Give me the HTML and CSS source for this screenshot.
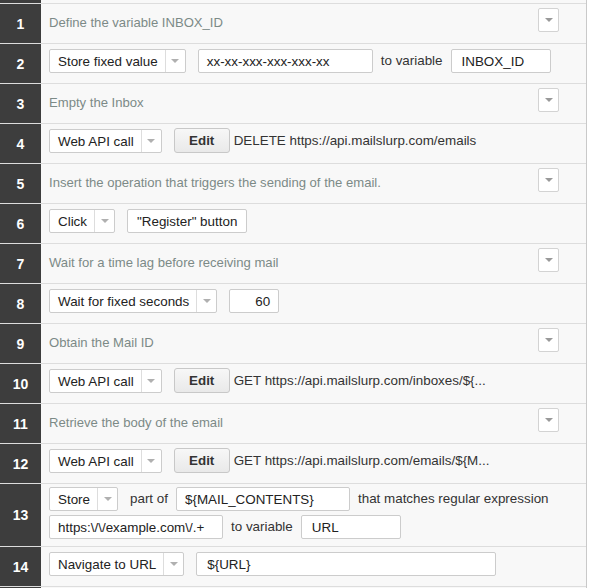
FILE: index.html
```html
<!DOCTYPE html>
<html>
<head>
<meta charset="utf-8">
<link rel="stylesheet" href="styles.css">
</head>
<body>
<div class="steps">
  <div class="row stub"><div class="num"></div><div class="body"></div></div>

  <div class="row">
    <div class="num">1</div>
    <div class="body desc"><span class="desc-text">Define the variable INBOX_ID</span><span class="toggle"><i class="tri"></i></span></div>
  </div>

  <div class="row">
    <div class="num">2</div>
    <div class="body ctrl">
      <span class="select">Store fixed value<span class="arrow"><i class="tri"></i></span></span>
      <span class="input w175">xx-xx-xxx-xxx-xxx-xx</span>
      <span class="label">to variable</span>
      <span class="input w99 pad10">INBOX_ID</span>
    </div>
  </div>

  <div class="row">
    <div class="num">3</div>
    <div class="body desc"><span class="desc-text">Empty the Inbox</span><span class="toggle"><i class="tri"></i></span></div>
  </div>

  <div class="row">
    <div class="num">4</div>
    <div class="body ctrl">
      <span class="select">Web API call<span class="arrow"><i class="tri"></i></span></span>
      <span class="btn">Edit</span>
      <span class="label">DELETE https://api.mailslurp.com/emails</span>
    </div>
  </div>

  <div class="row">
    <div class="num">5</div>
    <div class="body desc"><span class="desc-text">Insert the operation that triggers the sending of the email.</span><span class="toggle"><i class="tri"></i></span></div>
  </div>

  <div class="row">
    <div class="num">6</div>
    <div class="body ctrl">
      <span class="select">Click<span class="arrow"><i class="tri"></i></span></span>
      <span class="input plain">"Register" button</span>
    </div>
  </div>

  <div class="row">
    <div class="num">7</div>
    <div class="body desc"><span class="desc-text">Wait for a time lag before receiving mail</span><span class="toggle"><i class="tri"></i></span></div>
  </div>

  <div class="row">
    <div class="num">8</div>
    <div class="body ctrl">
      <span class="select">Wait for fixed seconds<span class="arrow"><i class="tri"></i></span></span>
      <span class="input w50 right">60</span>
    </div>
  </div>

  <div class="row">
    <div class="num">9</div>
    <div class="body desc"><span class="desc-text">Obtain the Mail ID</span><span class="toggle"><i class="tri"></i></span></div>
  </div>

  <div class="row">
    <div class="num">10</div>
    <div class="body ctrl">
      <span class="select">Web API call<span class="arrow"><i class="tri"></i></span></span>
      <span class="btn">Edit</span>
      <span class="label">GET https://api.mailslurp.com/inboxes/${...</span>
    </div>
  </div>

  <div class="row">
    <div class="num">11</div>
    <div class="body desc"><span class="desc-text">Retrieve the body of the email</span><span class="toggle"><i class="tri"></i></span></div>
  </div>

  <div class="row">
    <div class="num">12</div>
    <div class="body ctrl">
      <span class="select">Web API call<span class="arrow"><i class="tri"></i></span></span>
      <span class="btn">Edit</span>
      <span class="label">GET https://api.mailslurp.com/emails/${M...</span>
    </div>
  </div>

  <div class="row tall">
    <div class="num">13</div>
    <div class="body ctrl multi">
      <div class="line">
        <span class="select">Store<span class="arrow"><i class="tri"></i></span></span>
        <span class="label">part of</span>
        <span class="input w174">${MAIL_CONTENTS}</span>
        <span class="label">that matches regular expression</span>
      </div>
      <div class="line">
        <span class="input w174">https:\/\/example.com\/.+</span>
        <span class="label">to variable</span>
        <span class="input w99 pad10">URL</span>
      </div>
    </div>
  </div>

  <div class="row">
    <div class="num">14</div>
    <div class="body ctrl">
      <span class="select">Navigate to URL<span class="arrow"><i class="tri"></i></span></span>
      <span class="input w299 pad10">${URL}</span>
    </div>
  </div>

  <div class="row end"><div class="num"></div><div class="body"></div></div>
</div>
</body>
</html>
```

FILE: styles.css
```css
html, body {
  margin: 0;
  padding: 0;
  background: #ffffff;
}

body {
  font-family: "Liberation Sans", Arial, Helvetica, sans-serif;
  font-size: 13px;
  color: #222222;
  overflow: hidden;
  height: 588px;
}

.steps {
  width: 586px;
  border-right: 1px solid #c9c9c9;
  margin-top: -36px;
}

.row {
  display: flex;
  height: 39px;
  border-bottom: 1px solid #dddddd;
  background: #f8f8f8;
}

.row.tall {
  height: 62px;
}

.row.end {
  height: 1px;
  border-bottom: 0;
}

.num {
  width: 41px;
  flex: none;
  background: #3d3d3d;
  color: #ffffff;
  font-weight: bold;
  font-size: 14px;
  display: flex;
  align-items: center;
  justify-content: center;
}

.body {
  flex: 1;
  padding-left: 8px;
  display: flex;
  min-width: 0;
}

.desc {
  align-items: flex-start;
  justify-content: space-between;
  padding-right: 27px;
}

.desc-text {
  color: #7c8a87;
  line-height: 38px;
  font-size: 13.1px;
  white-space: nowrap;
}

.toggle {
  margin-top: 4px;
  width: 19px;
  height: 22px;
  border: 1px solid #d3d3d3;
  border-radius: 2px;
  background: #ffffff;
  display: flex;
  align-items: center;
  justify-content: center;
  flex: none;
}

.tri {
  display: block;
  width: 0;
  height: 0;
  border-left: 4px solid transparent;
  border-right: 4px solid transparent;
  border-top: 4px solid #999999;
}

.ctrl {
  align-items: flex-start;
  padding-top: 5px;
  gap: 8px;
  white-space: nowrap;
  font-size: 13.4px;
}

.ctrl.multi {
  flex-direction: column;
  padding-top: 3px;
  gap: 4px;
}

.line {
  display: flex;
  align-items: center;
  gap: 8px;
}

.select {
  display: inline-flex;
  align-items: center;
  height: 22px;
  border: 1px solid #cccccc;
  border-radius: 2px;
  background: #ffffff;
  padding-left: 8px;
  margin-right: 4px;
  box-sizing: content-box;
}

.select .arrow {
  margin-left: 7px;
  width: 19px;
  height: 22px;
  border-left: 1px solid #dddddd;
  display: flex;
  align-items: center;
  justify-content: center;
}

.select .tri {
  border-top-color: #b0b0b0;
}

.input {
  display: inline-flex;
  align-items: center;
  height: 22px;
  border: 1px solid #cccccc;
  border-radius: 2px;
  background: #ffffff;
  padding: 0 8px;
  box-sizing: content-box;
}

.input.plain {
  padding: 0 9px;
}

.w175 { width: 157px; }
.w174 { width: 156px; }
.w99 { width: 78px; }
.w50 { width: 32px; }
.w299 { width: 278px; }

.input.pad10 {
  padding: 0 10px;
}

.input.right {
  justify-content: flex-end;
}

.label {
  height: 24px;
  line-height: 24px;
  color: #333333;
}

.btn {
  display: inline-flex;
  align-items: center;
  justify-content: center;
  width: 54px;
  height: 23px;
  margin-top: -1px;
  margin-right: -4px;
  border: 1px solid #c8c8c8;
  border-radius: 3px;
  background: linear-gradient(#f7f7f7, #e9e9e9);
  font-weight: bold;
  color: #333333;
}
```
